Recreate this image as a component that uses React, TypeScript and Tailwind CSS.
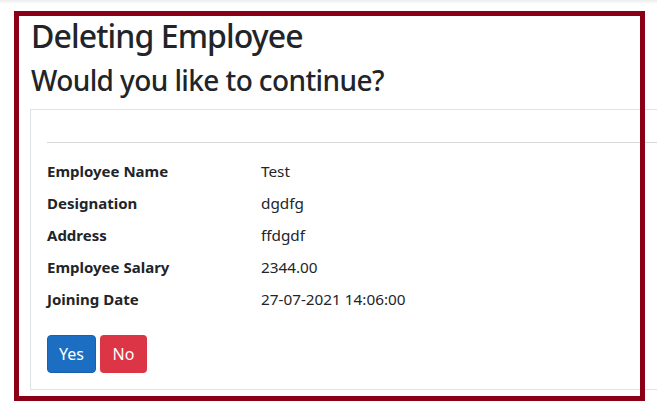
export default function App() {
  const rows: [string, string][] = [
    ["Employee Name", "Test"],
    ["Designation", "dgdfg"],
    ["Address", "ffdgdf"],
    ["Employee Salary", "2344.00"],
    ["Joining Date", "27-07-2021 14:06:00"],
  ];
  return (
    <div
      className="w-[657px] h-[413px] overflow-hidden text-[#212529]"
      style={{ fontFamily: '"Noto Sans", "Open Sans", sans-serif' }}
    >
      <div className="h-[4px] bg-gradient-to-b from-[#ececec] to-white" />
      <div className="ml-[14px] mt-[7px] w-[631px] h-[390px] border-[5px] border-[#8a0016]">
        <div className="pl-[11px]">
          <h1 className="text-[32px] leading-[38px] font-medium mt-[1px] ml-[1px] h-[40px] tracking-[-0.9px]">Deleting Employee</h1>
          <h3 className="text-[28px] leading-[34px] font-medium ml-[1px] mt-[6px] tracking-[-0.6px]">Would you like to continue?</h3>
          <div className="relative -z-10 mt-[12px] w-[660px] h-[281px] border border-[#dfe2e6] bg-white px-[16px] pt-[32px]">
            <div className="border-t border-[#d6d8db]" />
            <div className="mt-[12px]">
              {rows.map(([k, v]) => (
                <div key={k} className="flex h-[32px] items-center text-[15px]">
                  <div className="w-[214px] font-bold">{k}</div>
                  <div className="text-[15.3px]">{v}</div>
                </div>
              ))}
            </div>
            <div className="mt-[20px] flex gap-[4px]">
              <button className="h-[38px] w-[49px] rounded-[4px] bg-[#1b6ec2] border border-[#1861ac] text-white text-[16px]">Yes</button>
              <button className="h-[38px] w-[47px] rounded-[4px] bg-[#dc3545] text-white text-[16px]">No</button>
            </div>
          </div>
        </div>
      </div>
    </div>
  );
}
